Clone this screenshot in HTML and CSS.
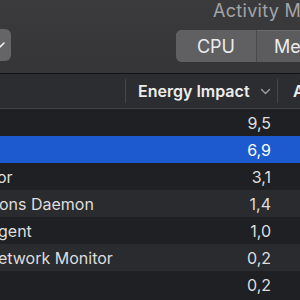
FILE: index.html
```html
<!DOCTYPE html>
<html lang="en">
<head>
  <meta charset="UTF-8" />
  <meta name="viewport" content="width=device-width, initial-scale=1.0" />
  <title>Activity Monitor</title>
  <link rel="stylesheet" href="styles.css">
</head>
<body>
  <div class="window">
    <header class="toolbar">
      <button class="popup">
        <svg width="12" height="8" viewBox="0 0 12 8"><path d="M2 2 L6 6 L10 2" fill="none" stroke="#f2f2f2" stroke-width="1.6" stroke-linecap="round" stroke-linejoin="round"/></svg>
      </button>
      <div class="toolbar-right">
        <div class="title">Activity Monitor</div>
        <div class="segmented">
          <span class="seg active">CPU</span>
          <span class="seg">Memory</span>
        </div>
      </div>
    </header>

    <div class="table">
      <div class="thead">
        <div class="col-name"></div>
        <div class="col-energy">
          <span>Energy Impact</span>
          <svg width="11" height="7" viewBox="0 0 11 7"><path d="M1.5 1.5 L5.5 5.5 L9.5 1.5" fill="none" stroke="#9c9c9e" stroke-width="1.4" stroke-linecap="round" stroke-linejoin="round"/></svg>
        </div>
        <div class="col-avg">Avg Energy Impact</div>
      </div>

      <div class="row">
        <div class="col-name"></div>
        <div class="col-energy">9,5</div>
      </div>
      <div class="row selected">
        <div class="col-name"></div>
        <div class="col-energy">6,9</div>
      </div>
      <div class="row">
        <div class="col-name"><span class="cut cut-or">or</span></div>
        <div class="col-energy">3,1</div>
      </div>
      <div class="row">
        <div class="col-name"><span class="cut cut-ons">ons Daemon</span></div>
        <div class="col-energy">1,4</div>
      </div>
      <div class="row">
        <div class="col-name"><span class="cut cut-gent">gent</span></div>
        <div class="col-energy">1,0</div>
      </div>
      <div class="row">
        <div class="col-name"><span class="cut cut-etwork">etwork Monitor</span></div>
        <div class="col-energy">0,2</div>
      </div>
      <div class="row">
        <div class="col-name"></div>
        <div class="col-energy">0,2</div>
      </div>
    </div>
  </div>
</body>
</html>
```

FILE: styles.css
```css
body {
  margin: 0;
  background: #1f2023;
  color: #dedede;
  font-family: Inter, "Noto Sans", sans-serif;
  overflow: hidden;
}

.window {
  width: 300px;
  height: 300px;
  overflow: hidden;
}

.toolbar {
  height: 73px;
  background: linear-gradient(#3b3b3e, #353538);
  border-bottom: 1px solid #141416;
  display: flex;
  align-items: flex-start;
  gap: 165px;
}

.popup {
  flex-shrink: 0;
  margin-top: 29px;
  margin-left: -29px;
  width: 40px;
  height: 32px;
  border: none;
  border-radius: 6px;
  background: #656567;
  padding: 0 0 0 23px;
  display: flex;
  align-items: center;
}

.toolbar-right {
  display: flex;
  flex-direction: column;
  flex-shrink: 0;
}

.title {
  margin: 0 0 0 37px;
  height: 30px;
  font-size: 18px;
  letter-spacing: 0.3px;
  color: #a4a4a6;
  white-space: nowrap;
  line-height: 21px;
}

.segmented {
  display: flex;
  height: 32px;
  border-radius: 6px;
  overflow: hidden;
  background: #5c5c5e;
  box-shadow: inset 0 1px 0 #6a6a6c;
}

.seg {
  display: flex;
  align-items: center;
  padding: 0 17px;
  font-size: 18px;
  color: #ececec;
  border-left: 1px solid #4a4a4c;
  white-space: nowrap;
}

.seg.active {
  width: 80px;
  box-sizing: border-box;
  justify-content: center;
  padding: 0;
  border-left: none;
  background: #606062;
}

.table {
  display: flex;
  flex-direction: column;
}

.thead {
  display: flex;
  height: 34px;
  background: #2c2d30;
  border-bottom: 1px solid #434346;
  font-weight: 600;
  font-size: 16px;
  color: #ececec;
}

.thead > div {
  display: flex;
  align-items: center;
}

.thead .col-name,
.thead .col-energy {
  border-right: 1px solid #48484b;
  margin: 5px 0;
}

.thead .col-energy {
  justify-content: space-between;
  padding: 0 6px 0 12px;
}

.col-name {
  width: 125px;
  flex-shrink: 0;
  overflow: hidden;
  white-space: nowrap;
}

.col-energy {
  width: 152px;
  flex-shrink: 0;
  box-sizing: border-box;
}

.col-avg {
  padding-left: 15px;
  white-space: nowrap;
}

.row {
  display: flex;
  align-items: center;
  height: 27px;
  font-size: 16px;
}

.row:nth-child(odd) {
  background: #2a2b2e;
}

.row.selected {
  background: #1d5ad0;
  color: #fff;
}

.row .col-energy {
  text-align: right;
  padding-right: 7px;
  width: 153px;
}

.cut {
  display: inline-block;
}

.cut-or { margin-left: -3px; }
.cut-ons { margin-left: -1px; }
.cut-gent { margin-left: -2px; }
.cut-etwork { margin-left: -2px; }
```
